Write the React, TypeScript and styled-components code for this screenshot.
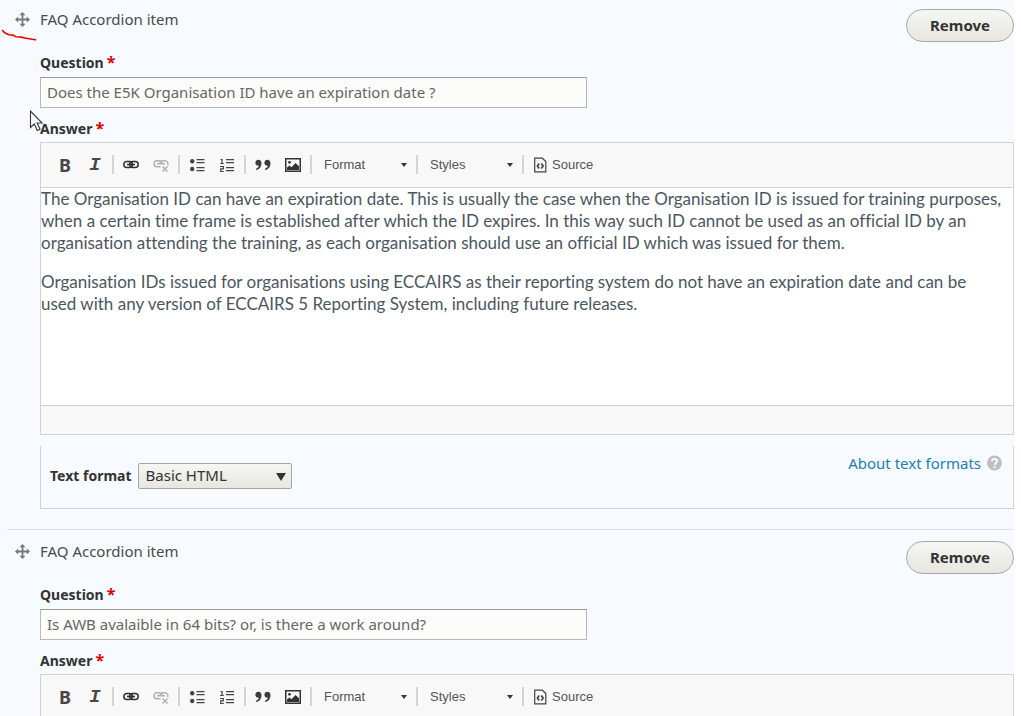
import React, { useId } from "react";
import styled, { createGlobalStyle, css } from "styled-components";

const uiFont = `"Lucida Grande", "Lucida Sans Unicode", "Noto Sans", sans-serif`;

const GlobalStyle = createGlobalStyle`
  *, *::before, *::after { box-sizing: border-box; }
  body {
    margin: 0;
    background: #fff;
    color: #333;
    font-family: ${uiFont};
    font-size: 15px;
    line-height: 20px;
  }
  button, input, select { font: inherit; color: inherit; margin: 0; }
`;

const Page = styled.main`
  position: relative;
  height: 100vh;
  overflow: hidden;
  margin-right: 7px;
  padding-left: 7px;
  background: #f7faff;
`;

const Item = styled.section`
  display: grid;
  grid-template-columns: 33px minmax(0, 1fr);
  padding: 11px 0 20px;
  border-top: 1px solid #e0e2e4;

  &:first-child {
    border-top: 0;
    padding-top: 9px;
  }
`;

const DragHandle = styled.button`
  display: block;
  width: 15px;
  height: 20px;
  margin-left: 8px;
  padding: 0;
  border: 0;
  background: none;
  cursor: move;

  svg { display: block; }
`;

const ItemHeader = styled.header`
  display: flex;
  justify-content: space-between;
  align-items: flex-start;
  height: 44px;
`;

const ItemTitle = styled.span`
  color: #4a4a4a;
`;

const RemoveButton = styled.button`
  width: 108px;
  height: 33px;
  padding: 0 0 2px;
  border: 1px solid #a6a6a6;
  border-radius: 17px;
  background: linear-gradient(#f6f6f3, #e7e7df);
  color: #333;
  font-weight: 700;
`;

const FieldLabel = styled.label`
  display: block;
  width: fit-content;
  font-size: 14px;
  font-weight: 700;
  color: #333;
`;

const Required = styled.span`
  margin-left: 3px;
  color: #e00000;
  font-size: 16px;
  line-height: 16px;
`;

const TextInput = styled.input`
  display: block;
  width: 547px;
  max-width: 100%;
  height: 31px;
  margin: 4px 0 11px;
  padding: 0 6px 2px;
  border: 1px solid #b8b8b8;
  border-top-color: #999;
  background: #fcfcfa;
  color: #666;
`;

const Editor = styled.div`
  margin-top: 3px;
  border: 1px solid #d1d1d1;
  background: #fff;
`;

const Toolbar = styled.div`
  display: flex;
  align-items: center;
  height: 45px;
  padding: 0 9px 1px;
  border-bottom: 1px solid #d1d1d1;
  background: #f8f8f8;
  color: #545454;
  font-family: "Liberation Sans", Arial, sans-serif;
  font-size: 13px;
`;

const ToolButton = styled.button<{ $faded?: boolean; $wide?: boolean }>`
  display: flex;
  align-items: center;
  justify-content: center;
  gap: 5px;
  width: ${(p) => (p.$wide ? "auto" : "30px")};
  height: 26px;
  padding: ${(p) => (p.$wide ? "0 8px" : "0")};
  border: 0;
  background: none;
  opacity: ${(p) => (p.$faded ? 0.35 : 1)};

  svg { display: block; }
`;

const Glyph = styled.span<{ $italic?: boolean }>`
  font-weight: 700;
  color: #474747;
  ${(p) =>
    p.$italic
      ? css`font-family: "Liberation Mono", monospace; font-style: italic; font-size: 19px;`
      : css`font-family: "Noto Sans", sans-serif; font-size: 18px;`}
`;

const Separator = styled.span`
  width: 2px;
  height: 19px;
  margin: 0 2px;
  background: #d4d4d4;
`;

const SelectBox = styled.span<{ $combo?: boolean }>`
  position: relative;
  display: block;
  width: ${(p) => (p.$combo ? "100px" : "154px")};

  svg {
    position: absolute;
    right: ${(p) => (p.$combo ? "7px" : "6px")};
    top: ${(p) => (p.$combo ? "11px" : "10px")};
    pointer-events: none;
  }
`;

const Select = styled.select<{ $combo?: boolean }>`
  appearance: none;
  display: block;
  width: 100%;
  height: 26px;
  border-radius: 2px;
  ${(p) =>
    p.$combo
      ? css`
          padding: 0 20px 0 10px;
          border: 0;
          background: none;
        `
      : css`
          padding: 0 24px 2px 7px;
          border: 1px solid #a6a6a6;
          background: linear-gradient(#f6f6f3, #e7e7df);
        `}
`;

const EditorBody = styled.div`
  height: 217px;
  padding-right: 9px;
  color: #4b5661;
  font-family: Lato, sans-serif;
  font-size: 17px;
  font-variant-ligatures: none;
  line-height: 22px;
  outline: 0;

  p { margin: 0 0 17px; }
`;

const EditorFooter = styled.div`
  height: 29px;
  border-top: 1px solid #d1d1d1;
  background: #f8f8f8;
`;

const FormatPanel = styled.div`
  display: flex;
  justify-content: space-between;
  align-items: flex-start;
  height: 63px;
  margin-top: 11px;
  padding: 7px 11px 0 9px;
  border: 1px solid #d1d1d1;
  border-top: 0;
`;

const FormatField = styled.div`
  display: flex;
  align-items: center;
  gap: 6px;
  margin-top: 10px;
`;

const HelpLink = styled.a`
  display: flex;
  align-items: center;
  gap: 6px;
  color: #1a7fb5;
  text-decoration: none;
`;

const RedStroke = styled.svg`
  position: absolute;
  left: 0;
  top: 26px;
`;

const Pointer = styled.svg`
  position: absolute;
  left: 29px;
  top: 109px;
`;

const MoveIcon = () => (
  <svg width="15" height="20" viewBox="0 0 15 20" fill="#787878" aria-hidden="true">
    <path d="M6.6 5.5h1.8v4.1h4.1v1.8H8.4v4.1H6.6v-4.1H2.5V9.600h4.100z" />
    <path d="M7.500 3l3 3.200h-6zM7.500 18l3-3.200h-6zM0 10.500l3.200-3v6zM15 10.500l-3.200-3v6z" />
  </svg>
);

const LinkIcon = () => (
  <svg width="16" height="14" viewBox="0 0 16 14" aria-hidden="true">
    <g fill="none" stroke="#2f2f2f" strokeWidth="1.500">
      <rect x="0.800" y="3.500" width="8.600" height="6" rx="3" />
      <rect x="6.600" y="3.500" width="8.600" height="6" rx="3" />
      <path d="M4 6.500h8" strokeWidth="1.600" />
    </g>
  </svg>
);

const UnlinkIcon = () => (
  <svg width="16" height="16" viewBox="0 0 16 16" aria-hidden="true">
    <g fill="none" stroke="#2f2f2f" strokeWidth="1.500">
      <path d="M7.500 9.700H4a3 3 0 0 1 0-6h2.500a3 3 0 0 1 2.800 2" />
      <path d="M7 6a3 3 0 0 1 2.500-2.300H12a3 3 0 0 1 2.500 4.500M4 6.700h8" />
      <path d="M9.500 9.500l5 5M14.500 9.500l-5 5" />
    </g>
  </svg>
);

const BulletIcon = () => (
  <svg width="16" height="16" viewBox="0 0 16 16" fill="#444" aria-hidden="true">
    <circle cx="3.200" cy="4.200" r="2.200" />
    <circle cx="3.200" cy="12" r="2.200" />
    <path d="M7.500 2h8v1.300h-8zM7.500 5h8v1.300h-8zM7.500 10h8v1.300h-8zM7.500 13h8v1.300h-8z" />
  </svg>
);

const NumberIcon = () => (
  <svg width="16" height="16" viewBox="0 0 16 16" fill="#444" aria-hidden="true">
    <path d="M7 2h8v1.300H7zM7 5h8v1.300H7zM7 10h8v1.300H7zM7 13h8v1.300H7z" />
    <path d="M1.500 2.500h1.500v4M1.200 6.500h3.600M1 9.500h3.300v2.400H1.700v2.600h3.100" fill="none" stroke="#444" strokeWidth="1.200" />
  </svg>
);

const QuoteIcon = () => (
  <svg width="18" height="14" viewBox="0 0 18 14" fill="#3c3c3c" aria-hidden="true">
    <path d="M4.400 1.800c2 0 3.100 1.400 3.100 3.700 0 3.200-2 5.700-5.200 6.600l-.5-1.200c1.600-.6 2.800-1.700 3.100-3.100C2.600 7.900 1.400 6.600 1.400 4.800c0-1.800 1.300-3 3-3zM13.400 1.800c2 0 3.100 1.400 3.100 3.700 0 3.200-2 5.700-5.200 6.600l-.5-1.200c1.600-.6 2.800-1.700 3.100-3.100-2.300.1-3.500-1.200-3.500-3 0-1.800 1.300-3 3-3z" />
  </svg>
);

const ImageIcon = () => (
  <svg width="16" height="14" viewBox="0 0 16 14" aria-hidden="true">
    <rect x="0.750" y="0.750" width="14.500" height="12.500" fill="none" stroke="#333" strokeWidth="1.500" />
    <circle cx="4.500" cy="4.300" r="1.400" fill="#333" />
    <path d="M2 12V9.500L4.500 7.500l2 1.700L10.500 5 14 8.300V12z" fill="#333" />
  </svg>
);

const SourceIcon = () => (
  <svg width="13" height="16" viewBox="0 0 13 16" fill="none" stroke="#444" aria-hidden="true">
    <path d="M.7 1.200h7.600l3.500 3.300v10.300H.7z" strokeWidth="1.200" />
    <path d="M5.200 6.500L3.400 9l1.800 2.500M7.300 6.500L9.100 9l-1.800 2.500" strokeWidth="1.700" />
  </svg>
);

const Caret = ({ large = false }: { large?: boolean }) => (
  <svg width={large ? 10 : 6} height={large ? 8 : 4} viewBox="0 0 10 8" preserveAspectRatio="none" aria-hidden="true">
    <path d="M0 0h10L5 8z" fill="#333" />
  </svg>
);

const HelpIcon = () => (
  <svg width="15" height="16" viewBox="0 0 16 16" aria-hidden="true">
    <circle cx="8" cy="8" r="8" fill="#bfbfbf" />
    <path d="M5.300 6.200C5.300 4.500 6.400 3.600 8 3.600s2.700 1 2.700 2.400C10.700 7.800 8.200 8 8.200 10" fill="none" stroke="#fff" strokeWidth="1.900" />
    <circle cx="8.200" cy="12.300" r="1.200" fill="#fff" />
  </svg>
);

const Combo = ({ name }: { name: string }) => (
  <SelectBox $combo>
    <Select $combo aria-label={name}>
      <option>{name}</option>
    </Select>
    <Caret />
  </SelectBox>
);

const EditorToolbar = () => (
  <Toolbar role="toolbar">
    <ToolButton type="button" aria-label="Bold"><Glyph>B</Glyph></ToolButton>
    <ToolButton type="button" aria-label="Italic"><Glyph $italic>I</Glyph></ToolButton>
    <Separator />
    <ToolButton type="button" aria-label="Link"><LinkIcon /></ToolButton>
    <ToolButton type="button" aria-label="Unlink" $faded><UnlinkIcon /></ToolButton>
    <Separator />
    <ToolButton type="button" aria-label="Bulleted list"><BulletIcon /></ToolButton>
    <ToolButton type="button" aria-label="Numbered list"><NumberIcon /></ToolButton>
    <Separator />
    <ToolButton type="button" aria-label="Block quote"><QuoteIcon /></ToolButton>
    <ToolButton type="button" aria-label="Image"><ImageIcon /></ToolButton>
    <Separator />
    <Combo name="Format" />
    <Separator />
    <Combo name="Styles" />
    <Separator />
    <ToolButton type="button" $wide><SourceIcon />Source</ToolButton>
  </Toolbar>
);

type FaqItemProps = { question: string; answer: string[]; withFormat?: boolean };

const FaqItem = ({ question, answer, withFormat = false }: FaqItemProps) => {
  const id = useId();
  return (
    <Item>
      <DragHandle type="button" aria-label="Drag to re-order"><MoveIcon /></DragHandle>
      <div>
        <ItemHeader>
          <ItemTitle>FAQ Accordion item</ItemTitle>
          <RemoveButton type="button">Remove</RemoveButton>
        </ItemHeader>
        <FieldLabel htmlFor={`${id}-question`}>Question<Required>*</Required></FieldLabel>
        <TextInput id={`${id}-question`} defaultValue={question} required />
        <FieldLabel as="div" id={`${id}-answer`}>Answer<Required>*</Required></FieldLabel>
        <Editor>
          <EditorToolbar />
          <EditorBody contentEditable suppressContentEditableWarning role="textbox" aria-multiline="true" aria-labelledby={`${id}-answer`} spellCheck={false}>
            {answer.map((text) => <p key={text}>{text}</p>)}
          </EditorBody>
          <EditorFooter />
        </Editor>
        {withFormat && (
          <FormatPanel>
            <FormatField>
              <FieldLabel htmlFor={`${id}-format`}>Text format</FieldLabel>
              <SelectBox>
                <Select id={`${id}-format`}><option>Basic HTML</option></Select>
                <Caret large />
              </SelectBox>
            </FormatField>
            <HelpLink href="#formats">About text formats<HelpIcon /></HelpLink>
          </FormatPanel>
        )}
      </div>
    </Item>
  );
};

const items: FaqItemProps[] = [
  {
    question: "Does the E5K Organisation ID have an expiration date ?",
    answer: [
      "The Organisation ID can have an expiration date. This is usually the case when the Organisation ID is issued for training purposes, when a certain time frame is established after which the ID expires. In this way such ID cannot be used as an official ID by an organisation attending the training, as each organisation should use an official ID which was issued for them.",
      "Organisation IDs issued for organisations using ECCAIRS as their reporting system do not have an expiration date and can be used with any version of ECCAIRS 5 Reporting System, including future releases.",
    ],
    withFormat: true,
  },
  { question: "Is AWB avalaible in 64 bits? or, is there a work around?", answer: [] },
];

export default function App() {
  return (
    <>
      <GlobalStyle />
      <Page>
        {items.map((item) => <FaqItem key={item.question} {...item} />)}
        <RedStroke width="40" height="18" viewBox="0 0 40 18" fill="none" stroke="#f00000" strokeWidth="1.600" strokeLinecap="round" aria-hidden="true">
          <path d="M2.500 4.500L5 7l4 1.800 4 .3 3 1.600 5 .4 5 1.200 9.500 1.500" />
        </RedStroke>
        <Pointer width="16" height="24" viewBox="0 0 16 24" fill="#fff" stroke="#333" strokeWidth="1.100" aria-hidden="true">
          <path d="M1.500 2v16.500l3.800-3.500 3 6.500 2.800-1.300-3-6.200h5z" />
        </Pointer>
      </Page>
    </>
  );
}
